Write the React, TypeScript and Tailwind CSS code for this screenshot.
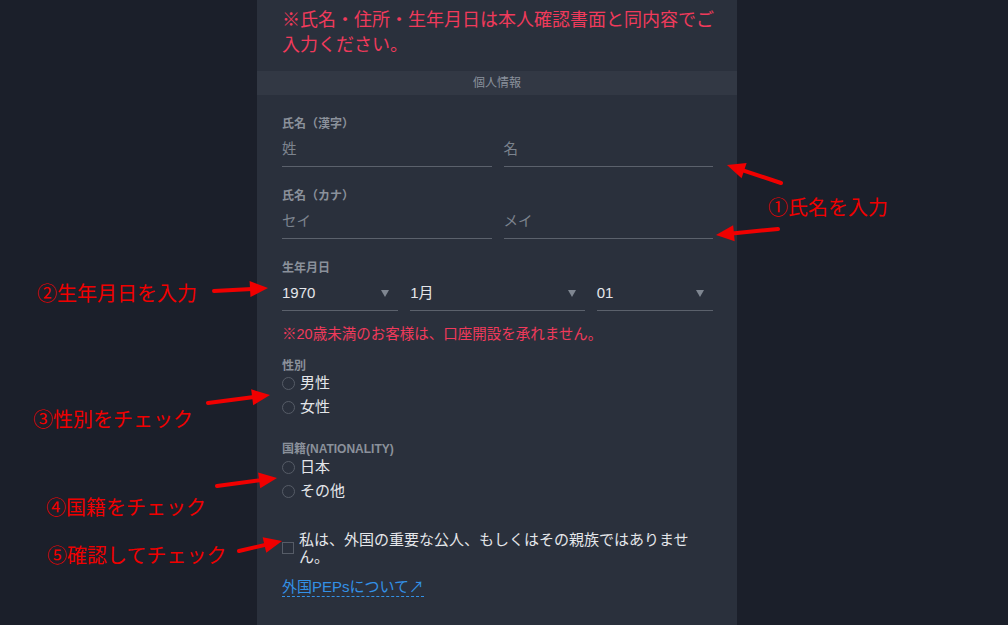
import React from 'react';

const font = { fontFamily: '"Liberation Sans", "Noto Sans CJK JP", sans-serif' };

type ArrowProps = { x1: number; y1: number; x2: number; y2: number };

// red annotation arrow, tip at (x2, y2)
const Arrow: React.FC<ArrowProps> = ({ x1, y1, x2, y2 }) => {
  const dx = x2 - x1;
  const dy = y2 - y1;
  const len = Math.hypot(dx, dy);
  const ux = dx / len;
  const uy = dy / len;
  const head = 18;
  const half = 8;
  const bx = x2 - ux * head;
  const by = y2 - uy * head;
  const pts = `${x2},${y2} ${bx - uy * half},${by + ux * half} ${bx + uy * half},${by - ux * half}`;
  return (
    <g>
      <line x1={x1} y1={y1} x2={bx + ux * 2} y2={by + uy * 2} stroke="#f00000" strokeWidth={4} strokeLinecap="round" />
      <polygon points={pts} fill="#f00000" />
    </g>
  );
};

const Label: React.FC<{ children: React.ReactNode; className?: string }> = ({ children, className }) => (
  <div className={`text-[12px] font-bold leading-[14px] text-[#8b919b] ${className ?? ''}`}>{children}</div>
);

const TextField: React.FC<{ placeholder: string }> = ({ placeholder }) => (
  <div className="flex h-[34px] items-center border-b border-[#5b616c] text-[14.5px] text-[#7c838e]">
    {placeholder}
  </div>
);

const SelectField: React.FC<{ value: string }> = ({ value }) => (
  <div className="flex h-[34px] items-center justify-between border-b border-[#5b616c] pr-[9px] text-[15px] text-[#e4e6ea]">
    <span>{value}</span>
    <svg width="8" height="7" viewBox="0 0 8 7">
      <polygon points="0,0 8,0 4,7" fill="#7f8691" />
    </svg>
  </div>
);

const Radio: React.FC<{ label: string }> = ({ label }) => (
  <div className="flex h-[24px] items-center gap-[5px] text-[15px] text-[#e4e6ea]">
    <span className="h-[13px] w-[13px] rounded-full border-[1.5px] border-[#565c67]" />
    <span>{label}</span>
  </div>
);

const notes = [
  { text: '①氏名を入力', left: 768, top: 194 },
  { text: '②生年月日を入力', left: 37, top: 280 },
  { text: '③性別をチェック', left: 33, top: 406 },
  { text: '④国籍をチェック', left: 46, top: 494 },
  { text: '⑤確認してチェック', left: 47, top: 542 },
];

export default function App() {
  return (
    <div className="relative h-[625px] w-full overflow-hidden bg-[#1b1f2a]" style={font}>
      <div className="ml-[257px] h-full w-[480px] bg-[#2a303c] pt-[8px]">
        <p className="mr-[20px] pl-[25px] text-[18px] leading-[25px] text-[#f03a5b]">
          ※氏名・住所・生年月日は本人確認書面と同内容でご入力ください。
        </p>

        <div className="mt-[13px] flex h-[24px] items-center justify-center bg-[#323844] text-[12px] text-[#8a919c]">
          個人情報
        </div>

        <div className="pl-[25px] pr-[24px]">
          <div className="mt-[22px]">
            <Label>氏名（漢字）</Label>
            <div className="mt-[2px] grid grid-cols-2 gap-[12px]">
              <TextField placeholder="姓" />
              <TextField placeholder="名" />
            </div>
          </div>

          <div className="mt-[22px]">
            <Label>氏名（カナ）</Label>
            <div className="mt-[2px] grid grid-cols-2 gap-[12px]">
              <TextField placeholder="セイ" />
              <TextField placeholder="メイ" />
            </div>
          </div>

          <div className="mt-[22px]">
            <Label>生年月日</Label>
            <div className="mt-[2px] grid grid-cols-[2fr_3fr_2fr] gap-[12px]">
              <SelectField value="1970" />
              <SelectField value="1月" />
              <SelectField value="01" />
            </div>
          </div>

          <p className="mt-[13px] text-[14.5px] leading-[20px] text-[#f03a5b]">
            ※20歳未満のお客様は、口座開設を承れません。
          </p>

          <Label className="mt-[15px]">性別</Label>
          <div className="-mt-[2px]">
            <Radio label="男性" />
            <Radio label="女性" />
          </div>

          <Label className="mt-[23px]">国籍(NATIONALITY)</Label>
          <div className="-mt-[1px]">
            <Radio label="日本" />
            <Radio label="その他" />
          </div>

          <div className="mt-[28px] flex items-center gap-[5px]">
            <span className="h-[12px] w-[12px] shrink-0 border-[1.5px] border-[#565c67]" />
            <span className="max-w-[395px] text-[15px] leading-[17px] text-[#e4e6ea]">
              私は、外国の重要な公人、もしくはその親族ではありません。
            </span>
          </div>

          <div className="mt-[10px]">
            <a className="border-b border-dashed border-[#3391e6] pb-[1px] text-[15px] leading-[20px] text-[#3391e6]">
              外国PEPsについて↗
            </a>
          </div>
        </div>
      </div>

      {notes.map((n) => (
        <div
          key={n.text}
          className="absolute whitespace-nowrap text-[20px] leading-[28px] text-[#f00000]"
          style={{ left: n.left, top: n.top }}
        >
          {n.text}
        </div>
      ))}

      <svg className="pointer-events-none absolute left-0 top-0" width="1008" height="625">
        <Arrow x1={781} y1={183} x2={727} y2={165} />
        <Arrow x1={778} y1={229} x2={716} y2={235} />
        <Arrow x1={214} y1={291} x2={268} y2={288} />
        <Arrow x1={208} y1={403} x2={270} y2={395} />
        <Arrow x1={217} y1={486} x2={277} y2={478} />
        <Arrow x1={239} y1={551} x2={282} y2={541} />
      </svg>
    </div>
  );
}
